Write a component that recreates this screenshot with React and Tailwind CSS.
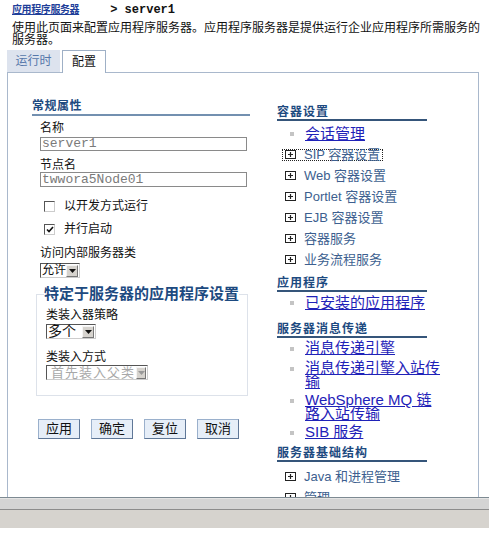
import React from "react";

const font = "font-['Liberation_Sans','Noto_Sans_CJK_SC',sans-serif]";

function ExpandIcon() {
  return (
    <svg width="11" height="9" viewBox="0 0 11 9" className="shrink-0">
      <rect x="0.5" y="0.5" width="10" height="8" fill="#fff" stroke="#222" />
      <path d="M3 4.5H8M5.5 2V7" stroke="#222" strokeWidth="1.2" />
    </svg>
  );
}

function Heading({ children, className = "" }) {
  return (
    <div
      className={`text-[12px] leading-[14px] font-bold tracking-[1px] text-[#1d4a80] border-b-2 border-[#35557a] w-[150px] ${className}`}
    >
      {children}
    </div>
  );
}

function LinkItem({ children, className = "" }) {
  return (
    <div className={`flex items-start ${className}`}>
      <span className="mt-[6px] ml-[13px] w-[4px] h-[4px] bg-[#c4c4c4] shrink-0" />
      <a className="ml-[11px] w-[138px] text-[15px] leading-[14px] text-[#1f22b8] underline">
        {children}
      </a>
    </div>
  );
}

function TreeItem({ children, focus }) {
  return (
    <div className="h-[21px] flex items-center">
      <div
        className={`flex items-center ml-[5px] pl-[2px] pr-[2px] h-[12px] ${
          focus ? "border border-dotted border-[#222]" : "border border-transparent"
        }`}
      >
        <ExpandIcon />
        <span className="ml-[8px] text-[13px] leading-[12px] text-[#3d5f8f]">{children}</span>
      </div>
    </div>
  );
}

function FakeSelect({ text, width, textClass = "", btn = "w-[12px]", disabled }) {
  return (
    <div
      className={`flex items-center justify-between h-[15px] border border-t-[#555] border-l-[#555] border-b-[#ccc] border-r-[#ccc] bg-white ${width}`}
    >
      <span className={`pl-[1px] leading-[13px] whitespace-nowrap ${textClass} ${disabled ? "text-[#a8a8a8]" : "text-[#111]"}`}>
        {text}
      </span>
      <span
        className={`${btn} h-[12px] mr-[1px] shrink-0 flex items-center justify-center bg-[#d6d3ce] border border-t-[#f4f4f4] border-l-[#f4f4f4] border-b-[#777] border-r-[#777]`}
      >
        <svg width="7" height="4" viewBox="0 0 7 4">
          <path d="M0 0H7L3.5 4Z" fill={disabled ? "#999" : "#111"} />
        </svg>
      </span>
    </div>
  );
}

function Checkbox({ checked, label, className = "" }) {
  return (
    <div className={`flex items-center h-[16px] ${className}`}>
      <span className="ml-[12px] w-[11px] h-[11px] border border-t-[#555] border-l-[#555] border-b-[#ccc] border-r-[#ccc] bg-white flex items-center justify-center">
        {checked && (
          <svg width="8" height="7" viewBox="0 0 8 7">
            <path d="M1 3.5L3 5.5L7 1" stroke="#111" strokeWidth="1.6" fill="none" />
          </svg>
        )}
      </span>
      <span className="ml-[9px] text-[12px] leading-[14px] text-[#111]">{label}</span>
    </div>
  );
}

function Button({ children }) {
  return (
    <button className="w-[42px] h-[20px] text-[13px] leading-[16px] text-[#111] bg-[#e6eef8] border border-[#9ab0cc] border-b-[#5f7797] border-r-[#5f7797]">
      {children}
    </button>
  );
}

export default function App() {
  return (
    <div className={`w-[489px] h-[539px] overflow-hidden bg-white ${font}`}>
      <div className="pt-[3px] pl-[12px] h-[17px] flex items-center">
        <a className="text-[10px] leading-[14px] font-bold tracking-[-0.4px] text-[#1f3f9a] underline">
          应用程序服务器
        </a>
        <span className="ml-[31px] text-[12px] leading-[14px] font-bold font-['Liberation_Mono',monospace] text-[#111]">
          &gt; server1
        </span>
      </div>
      <p className="mt-[5px] ml-[12px] w-[470px] text-[12px] leading-[12px] text-[#111]">
        使用此页面来配置应用程序服务器。应用程序服务器是提供运行企业应用程序所需服务的服务器。
      </p>
      <div className="mt-[4px] ml-[7px] flex items-end h-[22px]">
        <div className="w-[53px] h-[22px] bg-[#dde3ee] flex items-center justify-center text-[12px] text-[#5577aa]">
          运行时
        </div>
        <div className="ml-[2px] w-[44px] h-[23px] -mb-px relative bg-white border border-b-0 border-[#9fb0c6] flex items-center justify-center text-[12px] text-[#111]">
          配置
        </div>
      </div>
      <div className="ml-[7px] w-[472px] h-[425px] border border-b-0 border-[#a9b8cc] overflow-hidden flex">
        <div className="ml-[24px] w-[218px] pt-[26px]">
          <div className="text-[12px] leading-[15px] font-bold tracking-[0.5px] text-[#1d4a80] border-b-2 border-[#7390b0]">
            常规属性
          </div>
          <div className="mt-[5px] ml-[8px] text-[12px] leading-[14px] text-[#111]">名称</div>
          <div className="mt-[2px] ml-[8px] w-[207px] h-[14px] border border-[#8a8a8a] font-['Liberation_Mono',monospace] text-[13px] leading-[12px] text-[#7a7a7a] pl-[1px]">
            server1
          </div>
          <div className="mt-[7px] ml-[8px] text-[12px] leading-[14px] text-[#111]">节点名</div>
          <div className="ml-[8px] w-[207px] h-[15px] border border-[#8a8a8a] font-['Liberation_Mono',monospace] text-[13px] leading-[13px] text-[#7a7a7a] pl-[1px]">
            twwora5Node01
          </div>
          <Checkbox className="mt-[11px]" label="以开发方式运行" />
          <Checkbox className="mt-[7px]" checked label="并行启动" />
          <div className="mt-[9px] ml-[8px] text-[12px] leading-[14px] text-[#111]">访问内部服务器类</div>
          <div className="mt-[3px] ml-[8px]">
            <FakeSelect text="允许" width="w-[40px]" textClass="text-[12px]" />
          </div>
          <fieldset className="mt-[8px] ml-[4px] w-[212px] border border-[#dde2ea] pl-[9px] pb-[15px]">
            <legend className="-ml-[2px] text-[15px] leading-[16px] font-bold text-[#1d4a80]">
              特定于服务器的应用程序设置
            </legend>
            <div className="mt-[6px] text-[12px] leading-[14px] text-[#111]">类装入器策略</div>
            <div className="mt-[2px]">
              <FakeSelect text="多个" width="w-[50px]" textClass="text-[14px]" />
            </div>
            <div className="mt-[11px] text-[12px] leading-[14px] text-[#111]">类装入方式</div>
            <div className="mt-[1px]">
              <FakeSelect
                text="首先装入父类"
                width="w-[102px]"
                textClass="text-[13px] tracking-[1px] pl-[4px]"
                btn="w-[10px]"
                disabled
              />
            </div>
          </fieldset>
          <div className="mt-[23px] ml-[6px] flex gap-[11px]">
            <Button>应用</Button>
            <Button>确定</Button>
            <Button>复位</Button>
            <Button>取消</Button>
          </div>
        </div>
        <div className="ml-[27px] w-[163px] pt-[32px]">
          <Heading>容器设置</Heading>
          <div className="mt-[2px] h-[21px] flex items-center">
            <span className="ml-[13px] w-[4px] h-[4px] bg-[#c4c4c4]" />
            <a className="ml-[11px] text-[15px] leading-[15px] text-[#1f22b8] underline">会话管理</a>
          </div>
          <TreeItem focus>SIP 容器设置</TreeItem>
          <TreeItem>Web 容器设置</TreeItem>
          <TreeItem>Portlet 容器设置</TreeItem>
          <TreeItem>EJB 容器设置</TreeItem>
          <TreeItem>容器服务</TreeItem>
          <TreeItem>业务流程服务</TreeItem>
          <Heading className="mt-[6px]">应用程序</Heading>
          <div className="h-[21px] flex items-center">
            <span className="ml-[13px] w-[4px] h-[4px] bg-[#c4c4c4]" />
            <a className="ml-[11px] text-[15px] leading-[15px] text-[#1f22b8] underline">已安装的应用程序</a>
          </div>
          <Heading className="mt-[9px]">服务器消息传递</Heading>
          <LinkItem className="mt-[3px]">消息传递引擎</LinkItem>
          <LinkItem className="mt-[6px]">消息传递引擎入站传输</LinkItem>
          <LinkItem className="mt-[4px]">WebSphere MQ 链路入站传输</LinkItem>
          <LinkItem className="mt-[4px]">SIB 服务</LinkItem>
          <Heading className="mt-[7px]">服务器基础结构</Heading>
          <div className="mt-[4px]">
            <TreeItem>Java 和进程管理</TreeItem>
            <TreeItem>管理</TreeItem>
          </div>
        </div>
      </div>
      <div className="h-px bg-[#7d8a92]" />
      <div className="h-[11px] bg-[#d4d4d4] border-t border-[#e4e4e4]" />
      <div className="h-px bg-[#8c8c8c]" />
      <div className="h-[18px] bg-[#d6d3ce]" />
    </div>
  );
}
